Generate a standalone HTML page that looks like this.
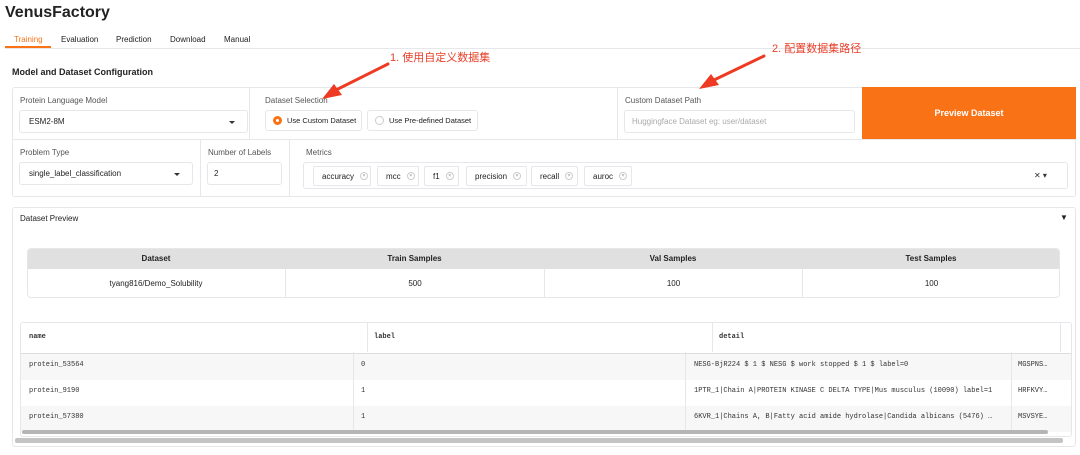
<!DOCTYPE html>
<html><head><meta charset="utf-8"><style>
*{box-sizing:border-box;margin:0;padding:0;white-space:nowrap}
body{width:1080px;height:455px;background:#fff;font-family:"Liberation Sans","Noto Sans CJK SC",sans-serif;color:#222;position:relative;overflow:hidden;font-size:8px}
.a{position:absolute}
.lbl{position:absolute;font-size:8px;color:#555}
.inp{position:absolute;border:1px solid #e5e7eb;border-radius:3px;background:#fff;font-size:8px;color:#222;padding-left:9px;display:flex;align-items:center}
.caret{position:absolute;right:12px;top:50%;margin-top:-1px;border-left:3px solid transparent;border-right:3px solid transparent;border-top:3px solid #333}
.chip{position:absolute;top:166px;height:20px;border:1px solid #e5e7eb;border-radius:2px;font-size:8px;display:flex;align-items:center;padding-left:8px;color:#222}
.chip i{font-style:normal;display:inline-block;width:8px;height:8px;border:1px solid #ccc;border-radius:50%;font-size:5px;line-height:6px;text-align:center;color:#888;margin-left:6px}
.mono{font-family:"Liberation Mono","DejaVu Sans Mono",monospace;font-size:7px;color:#333}
.cell{position:absolute;display:flex;align-items:center}
.rd{flex:0 0 9px;width:9px;height:9px;border-radius:50%;margin-right:5px}
</style></head><body>
<div class="a" style="left:5px;top:4px;font-size:16px;font-weight:bold;color:#222">VenusFactory</div>
<div class="a" style="left:14px;top:35px;font-size:8px;color:#f97316">Training</div>
<div class="a" style="left:61px;top:35px;font-size:8px">Evaluation</div>
<div class="a" style="left:116px;top:35px;font-size:8px">Prediction</div>
<div class="a" style="left:170px;top:35px;font-size:8px">Download</div>
<div class="a" style="left:224px;top:35px;font-size:8px">Manual</div>
<div class="a" style="left:5px;top:48px;width:1075px;height:1px;background:#e5e7eb"></div>
<div class="a" style="left:5px;top:46px;width:46px;height:2px;background:#f97316"></div>
<div class="a" style="left:12px;top:67px;font-size:9px;font-weight:bold">Model and Dataset Configuration</div>

<div class="a" style="left:12px;top:87px;width:1064px;height:110px;border:1px solid #e5e7eb;border-radius:3px"></div>
<div class="a" style="left:12px;top:139px;width:1064px;height:1px;background:#e5e7eb"></div>
<div class="a" style="left:249px;top:87px;width:1px;height:52px;background:#e5e7eb"></div>
<div class="a" style="left:617px;top:87px;width:1px;height:52px;background:#e5e7eb"></div>
<div class="a" style="left:200px;top:139px;width:1px;height:58px;background:#e5e7eb"></div>
<div class="a" style="left:289px;top:139px;width:1px;height:58px;background:#e5e7eb"></div>

<div class="lbl" style="left:20px;top:96px">Protein Language Model</div>
<div class="inp" style="left:19px;top:110px;width:229px;height:23px">ESM2-8M<span class="caret"></span></div>
<div class="lbl" style="left:265px;top:96px">Dataset Selection</div>
<div class="inp" style="left:265px;top:110px;width:97px;height:21px;padding-left:7px;font-size:7.5px"><span class="rd" style="border:3px solid #f97316"></span>Use Custom Dataset</div>
<div class="inp" style="left:367px;top:110px;width:111px;height:21px;padding-left:7px;font-size:7.5px"><span class="rd" style="border:1px solid #ccc"></span>Use Pre-defined Dataset</div>
<div class="lbl" style="left:625px;top:96px">Custom Dataset Path</div>
<div class="inp" style="left:624px;top:110px;width:231px;height:23px;color:#aaa;padding-left:7px">Huggingface Dataset eg: user/dataset</div>
<div class="a" style="left:862px;top:87px;width:214px;height:52px;background:#f97316;color:#fff;font-weight:bold;font-size:9px;display:flex;align-items:center;justify-content:center">Preview Dataset</div>

<div class="lbl" style="left:20px;top:148px">Problem Type</div>
<div class="inp" style="left:19px;top:162px;width:174px;height:23px">single_label_classification<span class="caret"></span></div>
<div class="lbl" style="left:208px;top:148px">Number of Labels</div>
<div class="inp" style="left:207px;top:162px;width:75px;height:23px;padding-left:6px">2</div>
<div class="lbl" style="left:306px;top:148px">Metrics</div>
<div class="inp" style="left:303px;top:162px;width:765px;height:27px"></div>
<div class="chip" style="left:313px;width:58px">accuracy<i>×</i></div>
<div class="chip" style="left:377px;width:42px">mcc<i>×</i></div>
<div class="chip" style="left:424px;width:35px">f1<i>×</i></div>
<div class="chip" style="left:466px;width:61px">precision<i>×</i></div>
<div class="chip" style="left:531px;width:47px">recall<i>×</i></div>
<div class="chip" style="left:584px;width:48px">auroc<i>×</i></div>
<div class="a" style="left:1034px;top:171px;font-size:8px;color:#333">✕ ▾</div>

<div class="a" style="left:12px;top:207px;width:1064px;height:240px;border:1px solid #e5e7eb;border-radius:3px"></div>
<div class="a" style="left:20px;top:214px;font-size:8px">Dataset Preview</div>
<div class="a" style="left:1060px;top:213px;font-size:8px">▼</div>

<div class="a" style="left:27px;top:248px;width:1033px;height:50px;border:1px solid #e5e7eb;border-radius:4px;overflow:hidden">
 <div class="a" style="left:0;top:0;width:1033px;height:20px;background:#e0e0e0"></div>
</div>
<div class="cell" style="left:27px;top:248px;width:258px;height:20px;justify-content:center;font-weight:bold;font-size:8px">Dataset</div>
<div class="cell" style="left:285px;top:248px;width:259px;height:20px;justify-content:center;font-weight:bold;font-size:8px">Train Samples</div>
<div class="cell" style="left:544px;top:248px;width:258px;height:20px;justify-content:center;font-weight:bold;font-size:8px">Val Samples</div>
<div class="cell" style="left:802px;top:248px;width:258px;height:20px;justify-content:center;font-weight:bold;font-size:8px">Test Samples</div>
<div class="cell" style="left:27px;top:268px;width:258px;height:30px;justify-content:center;font-size:8px">tyang816/Demo_Solubility</div>
<div class="cell" style="left:285px;top:268px;width:259px;height:30px;justify-content:center;font-size:8px;border-left:1px solid #e5e7eb">500</div>
<div class="cell" style="left:544px;top:268px;width:258px;height:30px;justify-content:center;font-size:8px;border-left:1px solid #e5e7eb">100</div>
<div class="cell" style="left:802px;top:268px;width:258px;height:30px;justify-content:center;font-size:8px;border-left:1px solid #e5e7eb">100</div>

<div class="a" style="left:20px;top:322px;width:1052px;height:115px;border:1px solid #e5e7eb;border-radius:3px;overflow:hidden">
 <div class="a" style="left:0;top:30px;width:1052px;height:1px;background:#ddd"></div>
 <div class="a" style="left:0;top:31px;width:1052px;height:26px;background:#f7f7f7"></div>
 <div class="a" style="left:0;top:83px;width:1052px;height:26px;background:#f7f7f7"></div>
</div>
<div class="a" style="left:367px;top:322px;width:1px;height:30px;background:#e5e7eb"></div>
<div class="a" style="left:712px;top:322px;width:1px;height:30px;background:#e5e7eb"></div>
<div class="a" style="left:1060px;top:322px;width:1px;height:30px;background:#e5e7eb"></div>
<div class="a" style="left:353px;top:352px;width:1px;height:78px;background:#e5e7eb"></div>
<div class="a" style="left:685px;top:352px;width:1px;height:78px;background:#e5e7eb"></div>
<div class="a" style="left:1011px;top:352px;width:1px;height:78px;background:#e5e7eb"></div>
<div class="cell mono" style="left:29px;top:322px;height:30px;font-weight:bold">name</div>
<div class="cell mono" style="left:374px;top:322px;height:30px;font-weight:bold">label</div>
<div class="cell mono" style="left:719px;top:322px;height:30px;font-weight:bold">detail</div>
<div class="cell mono" style="left:29px;top:352px;height:26px">protein_53564</div>
<div class="cell mono" style="left:361px;top:352px;height:26px">0</div>
<div class="cell mono" style="left:694px;top:352px;height:26px">NESG-BjR224 $ 1 $ NESG $ work stopped $ 1 $ label=0</div>
<div class="cell mono" style="left:1018px;top:352px;height:26px">MGSPNS…</div>
<div class="cell mono" style="left:29px;top:378px;height:26px">protein_9190</div>
<div class="cell mono" style="left:361px;top:378px;height:26px">1</div>
<div class="cell mono" style="left:694px;top:378px;height:26px">1PTR_1|Chain A|PROTEIN KINASE C DELTA TYPE|Mus musculus (10090) label=1</div>
<div class="cell mono" style="left:1018px;top:378px;height:26px">HRFKVY…</div>
<div class="cell mono" style="left:29px;top:404px;height:26px">protein_57380</div>
<div class="cell mono" style="left:361px;top:404px;height:26px">1</div>
<div class="cell mono" style="left:694px;top:404px;height:26px">6KVR_1|Chains A, B|Fatty acid amide hydrolase|Candida albicans (5476) …</div>
<div class="cell mono" style="left:1018px;top:404px;height:26px">MSVSYE…</div>
<div class="a" style="left:22px;top:430px;width:1026px;height:4px;background:#b5b5b5;border-radius:2px"></div>
<div class="a" style="left:15px;top:438px;width:1048px;height:5px;background:#c4c4c4;border-radius:2px"></div>

<div class="a" style="left:390px;top:49px;font-size:11px;color:#e8402a">1. 使用自定义数据集</div>
<div class="a" style="left:772px;top:40px;font-size:11px;color:#e8402a">2. 配置数据集路径</div>
<svg class="a" style="left:0;top:0" width="1080" height="455">
 <path d="M388 64 L336 90" stroke="#ee3a22" stroke-width="3" fill="none" stroke-linecap="round"/>
 <path d="M322 99 L334 84 L342 95 Z" fill="#ee3a22"/>
 <path d="M764 56 L714 80" stroke="#ee3a22" stroke-width="3" fill="none" stroke-linecap="round"/>
 <path d="M699 89 L711 74 L719 85 Z" fill="#ee3a22"/>
</svg>
</body></html>
